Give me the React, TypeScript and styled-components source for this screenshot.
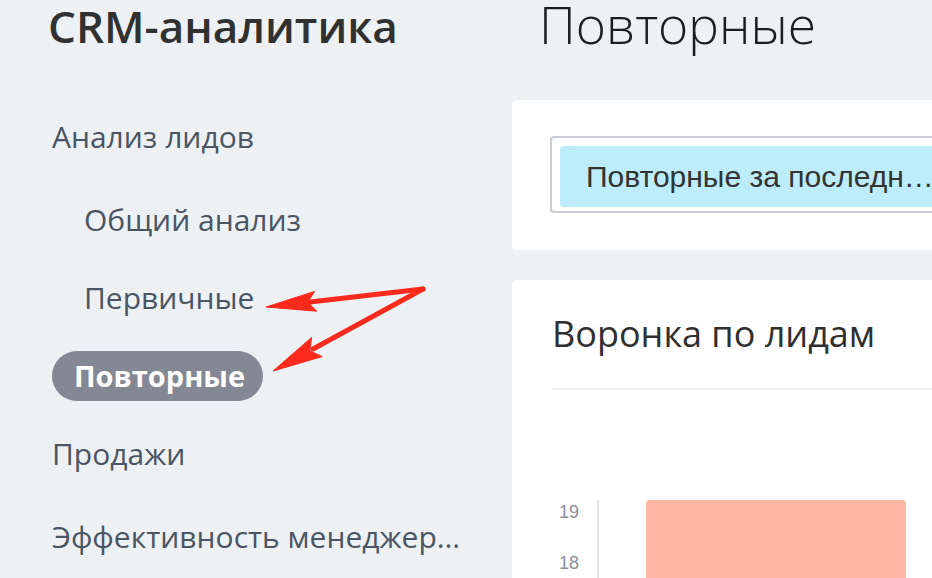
import React from "react";
import styled, { createGlobalStyle } from "styled-components";

const Global = createGlobalStyle`
  html, body { margin: 0; padding: 0; background: #edf1f4; overflow: hidden; }
  body { font-family: "Open Sans", "Noto Sans", sans-serif; }
  * { box-sizing: border-box; }
`;

const Page = styled.div`
  position: relative;
  display: flex;
  width: 932px;
  height: 578px;
  overflow: hidden;
  background: #edf1f4;
`;

const Sidebar = styled.aside`
  width: 512px;
  flex-shrink: 0;
  display: flex;
  flex-direction: column;
`;

const Brand = styled.h1`
  margin: 0;
  padding-left: 48px;
  font-size: 44px;
  line-height: 52px;
  font-weight: 600;
  color: #313131;
  letter-spacing: 0;
`;

const Nav = styled.nav`
  margin-top: 46px;
  padding-left: 49px;
  display: flex;
  flex-direction: column;
`;

const NavRow = styled.div<{ $level: number }>`
  height: 78px;
  flex-shrink: 0;
  display: flex;
  align-items: center;
  margin-bottom: ${(p) => (p.$level === 0 ? "5px" : "0")};
  padding-left: ${(p) => (p.$level === 0 ? "3px" : "35px")};
`;

const NavText = styled.span`
  display: block;
  width: 410px;
  font-size: 30px;
  line-height: 78px;
  color: #4a5563;
  white-space: nowrap;
  overflow: hidden;
  text-overflow: ellipsis;
`;

const ActivePill = styled.span`
  display: inline-block;
  height: 50px;
  line-height: 50px;
  padding: 0 18px 0 22px;
  border-radius: 25px;
  background: #838894;
  color: #ffffff;
  font-size: 29px;
  font-weight: 700;
  margin-left: -32px;
`;

const Main = styled.main`
  flex: 1;
  min-width: 0;
  display: flex;
  flex-direction: column;
`;

const TitleBar = styled.div`
  height: 100px;
  flex-shrink: 0;
  padding-left: 27px;
`;

const PageTitle = styled.h2`
  margin: 0;
  font-size: 51.5px;
  line-height: 48px;
  font-weight: 300;
  color: #1d1d1d;
  white-space: nowrap;
`;

const Card = styled.section<{ $pad: string }>`
  background: #ffffff;
  border-radius: 5px 0 0 5px;
  padding: ${(p) => p.$pad};
  flex-shrink: 0;
`;

const FilterCard = styled(Card)`
  height: 150px;
  margin-bottom: 30px;
`;

const SelectBox = styled.div`
  width: 560px;
  height: 77px;
  border: 2px solid #c9ccd2;
  border-radius: 4px;
  padding: 8px;
`;

const Chip = styled.div`
  height: 61px;
  width: 398px;
  background: #bdedfb;
  border-radius: 3px;
  padding: 0 10px 0 26px;
  font-family: "Liberation Sans", Arial, sans-serif;
  font-size: 30px;
  line-height: 61px;
  color: #333333;
  white-space: nowrap;
  overflow: hidden;
  text-overflow: ellipsis;
`;

const ChartCard = styled(Card)`
  height: 400px;
`;

const CardTitle = styled.h3`
  margin: 0;
  font-size: 36px;
  line-height: 48px;
  font-weight: 400;
  color: #2f2f2f;
  white-space: nowrap;
`;

const Divider = styled.div`
  margin-top: 30px;
  height: 2px;
  background: #eeeff0;
`;

const Chart = styled.div`
  margin-top: 110px;
  display: flex;
  height: 200px;
`;

const YAxis = styled.div`
  width: 45px;
  padding-right: 18px;
  display: flex;
  flex-direction: column;
  align-items: flex-end;
  gap: 27px;
`;

const Tick = styled.span`
  font-family: "Liberation Sans", Arial, sans-serif;
  font-size: 18px;
  line-height: 24px;
  color: #8a909b;
`;

const Plot = styled.div`
  border-left: 2px solid #e1e2e4;
  padding-left: 47px;
  display: flex;
  align-items: stretch;
`;

const Bar = styled.div`
  width: 260px;
  background: #fcb6a1;
  border-radius: 4px 4px 0 0;
`;

const Annotation = styled.svg`
  position: absolute;
  left: 0;
  top: 0;
  width: 932px;
  height: 578px;
  pointer-events: none;
`;

const subItems = ["Общий анализ", "Первичные"];

export default function App() {
  return (
    <>
      <Global />
      <Page>
        <Sidebar>
          <Brand>CRM-аналитика</Brand>
          <Nav>
            <NavRow $level={0}>
              <NavText>Анализ лидов</NavText>
            </NavRow>
            {subItems.map((s) => (
              <NavRow key={s} $level={1}>
                <NavText>{s}</NavText>
              </NavRow>
            ))}
            <NavRow $level={1}>
              <ActivePill>Повторные</ActivePill>
            </NavRow>
            <NavRow $level={0}>
              <NavText>Продажи</NavText>
            </NavRow>
            <NavRow $level={0}>
              <NavText>Эффективность менеджеров</NavText>
            </NavRow>
          </Nav>
        </Sidebar>
        <Main>
          <TitleBar>
            <PageTitle>Повторные</PageTitle>
          </TitleBar>
          <FilterCard $pad="36px 0 0 38px">
            <SelectBox>
              <Chip>Повторные за последние 30 дней</Chip>
            </SelectBox>
          </FilterCard>
          <ChartCard $pad="30px 0 0 40px">
            <CardTitle>Воронка по лидам</CardTitle>
            <Divider />
            <Chart>
              <YAxis>
                <Tick>19</Tick>
                <Tick>18</Tick>
              </YAxis>
              <Plot>
                <Bar />
              </Plot>
            </Chart>
          </ChartCard>
        </Main>
        <Annotation viewBox="0 0 932 578">
          <g fill="#fc2a1c" stroke="#fc2a1c" strokeLinejoin="round">
            <path d="M423 289 L310 302" strokeWidth="5" strokeLinecap="round" fill="none" />
            <path d="M423 289 L313 349" strokeWidth="5" strokeLinecap="round" fill="none" />
            <polygon points="266,307 314.6,291.4 307.7,302.2 316.8,311.2" strokeWidth="1" />
            <polygon points="273,371 311.6,337.4 309.8,350.9 322.2,356.6" strokeWidth="1" />
          </g>
        </Annotation>
      </Page>
    </>
  );
}
